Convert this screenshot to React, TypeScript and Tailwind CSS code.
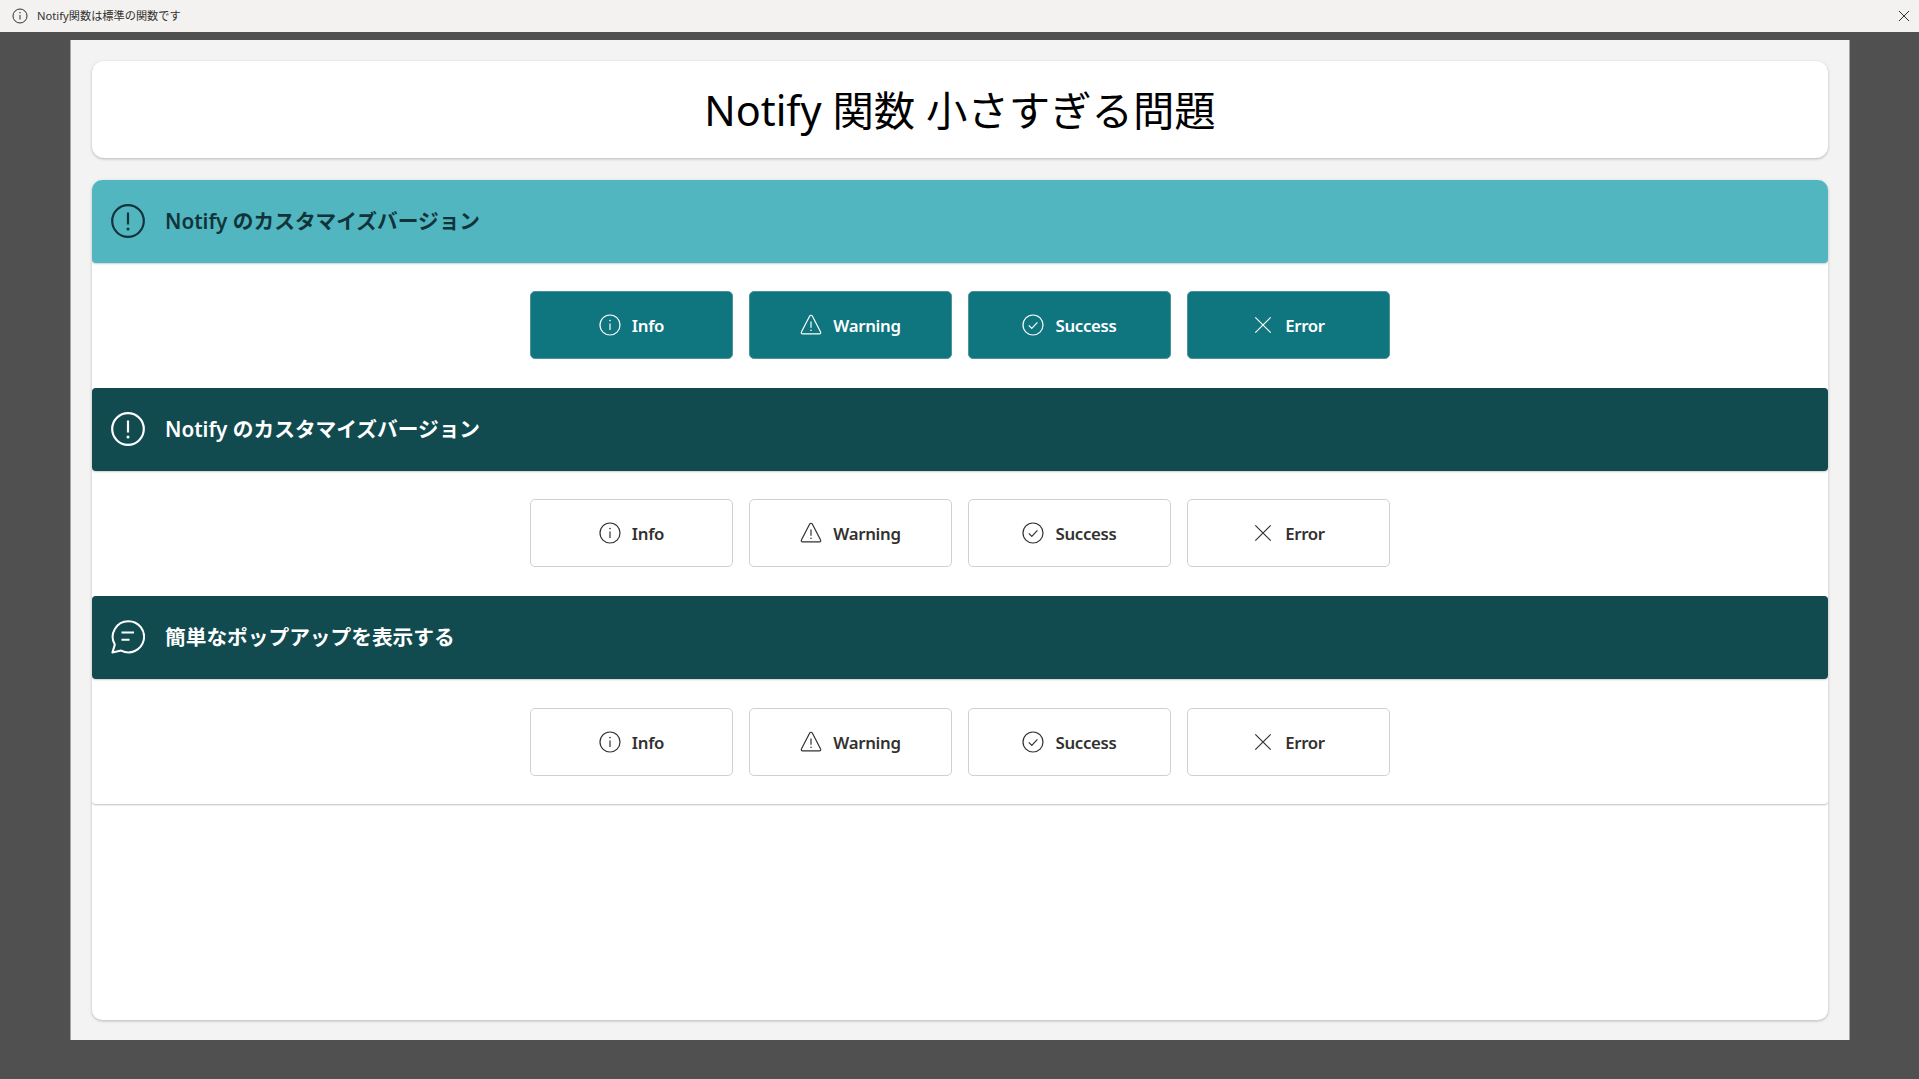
import React from "react";

const FONT = "font-['Noto_Sans','Noto_Sans_CJK_JP',sans-serif]";

function InfoIcon() {
  return (
    <svg width="22" height="22" viewBox="0 0 22 22" fill="none" stroke="currentColor" strokeWidth="1.2">
      <circle cx="11" cy="11" r="10" />
      <path d="M11 9.5V16" />
      <circle cx="11" cy="6.6" r="0.8" fill="currentColor" stroke="none" />
    </svg>
  );
}
function WarningIcon() {
  return (
    <svg width="22" height="22" viewBox="0 0 22 22" fill="none" stroke="currentColor" strokeWidth="1.2">
      <path d="M9.7 2a1.5 1.5 0 0 1 2.6 0l8.3 16a1.2 1.2 0 0 1-1.05 1.8H2.45A1.2 1.2 0 0 1 1.4 18z" strokeLinejoin="round" />
      <path d="M11 7.5v6.3" />
      <circle cx="11" cy="16.3" r="0.8" fill="currentColor" stroke="none" />
    </svg>
  );
}
function SuccessIcon() {
  return (
    <svg width="22" height="22" viewBox="0 0 22 22" fill="none" stroke="currentColor" strokeWidth="1.2">
      <circle cx="11" cy="11" r="10" />
      <path d="M6.8 11.4l3 3 5.6-6" />
    </svg>
  );
}
function ErrorIcon() {
  return (
    <svg width="22" height="22" viewBox="0 0 22 22" fill="none" stroke="currentColor" strokeWidth="1.2">
      <path d="M3.3 3.3l15.4 15.4M18.7 3.3L3.3 18.7" />
    </svg>
  );
}
function AlertIcon() {
  return (
    <svg className="mb-px" width="34" height="34" viewBox="0 0 34 34" fill="none" stroke="currentColor" strokeWidth="2.2">
      <circle cx="17" cy="17" r="15.8" />
      <path d="M17 8.5V20.5" />
      <circle cx="17" cy="25" r="1.5" fill="currentColor" stroke="none" />
    </svg>
  );
}
function ChatIcon() {
  return (
    <svg className="mb-px" width="34" height="34" viewBox="0 0 34 34" fill="none" stroke="currentColor" strokeWidth="2">
      <path d="M17.5 1.2A15.6 15.6 0 1 1 10.2 30.6L1.4 32.6L3.8 24.6A15.6 15.6 0 0 1 17.5 1.2Z" strokeLinejoin="round" />
      <path d="M10.5 12.4H23M10.5 19.7H18.5" />
    </svg>
  );
}

const BUTTONS = [
  { label: "Info", icon: <InfoIcon /> },
  { label: "Warning", icon: <WarningIcon /> },
  { label: "Success", icon: <SuccessIcon /> },
  { label: "Error", icon: <ErrorIcon /> },
];

function Section({ title, icon, headerClass, rowClass, filled }: { title: string; icon: React.ReactNode; headerClass: string; rowClass: string; filled: boolean }) {
  return (
    <section>
      <div className={`flex h-[83px] items-center gap-[20px] rounded-[4px] pl-[19px] shadow-[0_1px_2px_rgba(0,0,0,0.2)] ${headerClass}`}>
        {icon}
        <h2 className="text-[20.7px] font-semibold">{title}</h2>
      </div>
      <div className={`flex h-[125px] items-start justify-center gap-[16px] ${rowClass}`}>
        {BUTTONS.map((b) => (
          <button
            key={b.label}
            className={
              filled
                ? "flex h-[68px] w-[203px] items-center justify-center gap-[11px] rounded-[5px] border border-[#4f939a] bg-[#0f757f] text-[16.8px] font-semibold tracking-[-0.3px] text-white"
                : "flex h-[68px] w-[203px] items-center justify-center gap-[11px] rounded-[5px] border border-[#d2d0ce] bg-white text-[16.8px] font-semibold tracking-[-0.3px] text-[#323130]"
            }
          >
            {b.icon}
            <span className="pt-px">{b.label}</span>
          </button>
        ))}
      </div>
    </section>
  );
}

export default function App() {
  return (
    <div className={`flex h-[1079px] w-[1919px] flex-col overflow-hidden bg-[#505050] ${FONT}`}>
      <div className="flex h-[32px] items-center justify-between bg-[#f3f2f1] pl-[12px] pr-[10px] text-[#323130]">
        <div className="flex items-center gap-[9px]">
          <svg width="16" height="16" viewBox="0 0 16 16" fill="none" stroke="currentColor" strokeWidth="1">
            <circle cx="8" cy="8" r="7" />
            <path d="M8 7v4.5" />
            <circle cx="8" cy="4.8" r="0.7" fill="currentColor" stroke="none" />
          </svg>
          <span className="text-[11.2px]">Notify関数は標準の関数です</span>
        </div>
        <svg width="10" height="10" viewBox="0 0 10 10" fill="none" stroke="currentColor" strokeWidth="1">
          <path d="M0 0l10 10M10 0L0 10" />
        </svg>
      </div>
      <main className="ml-[70px] mt-[8px] flex h-[1000px] w-[1780px] flex-col gap-[22px] border-x border-[#a6a6a6] bg-[#f3f3f3] px-[21px] pb-[20px] pt-[21px]">
        <div className="flex h-[97px] items-center justify-center rounded-[12px] bg-white shadow-[0_1px_3px_rgba(0,0,0,0.25)]">
          <h1 className="pt-[2px] text-[41.4px] font-normal text-black">Notify 関数 小さすぎる問題</h1>
        </div>
        <div className="flex flex-1 flex-col overflow-hidden rounded-[10px] bg-white shadow-[0_1px_3px_rgba(0,0,0,0.25)]">
          <div className="rounded-b-[4px] shadow-[0_1px_2px_rgba(0,0,0,0.25)]">
            <Section title="Notify のカスタマイズバージョン" icon={<AlertIcon />} headerClass="bg-[#52b6c0] text-[#11343a]" rowClass="pt-[28px]" filled />
            <Section title="Notify のカスタマイズバージョン" icon={<AlertIcon />} headerClass="bg-[#114b50] text-white" rowClass="pt-[28px]" filled={false} />
            <Section title="簡単なポップアップを表示する" icon={<ChatIcon />} headerClass="bg-[#114b50] text-white" rowClass="pt-[29px]" filled={false} />
          </div>
        </div>
      </main>
    </div>
  );
}
